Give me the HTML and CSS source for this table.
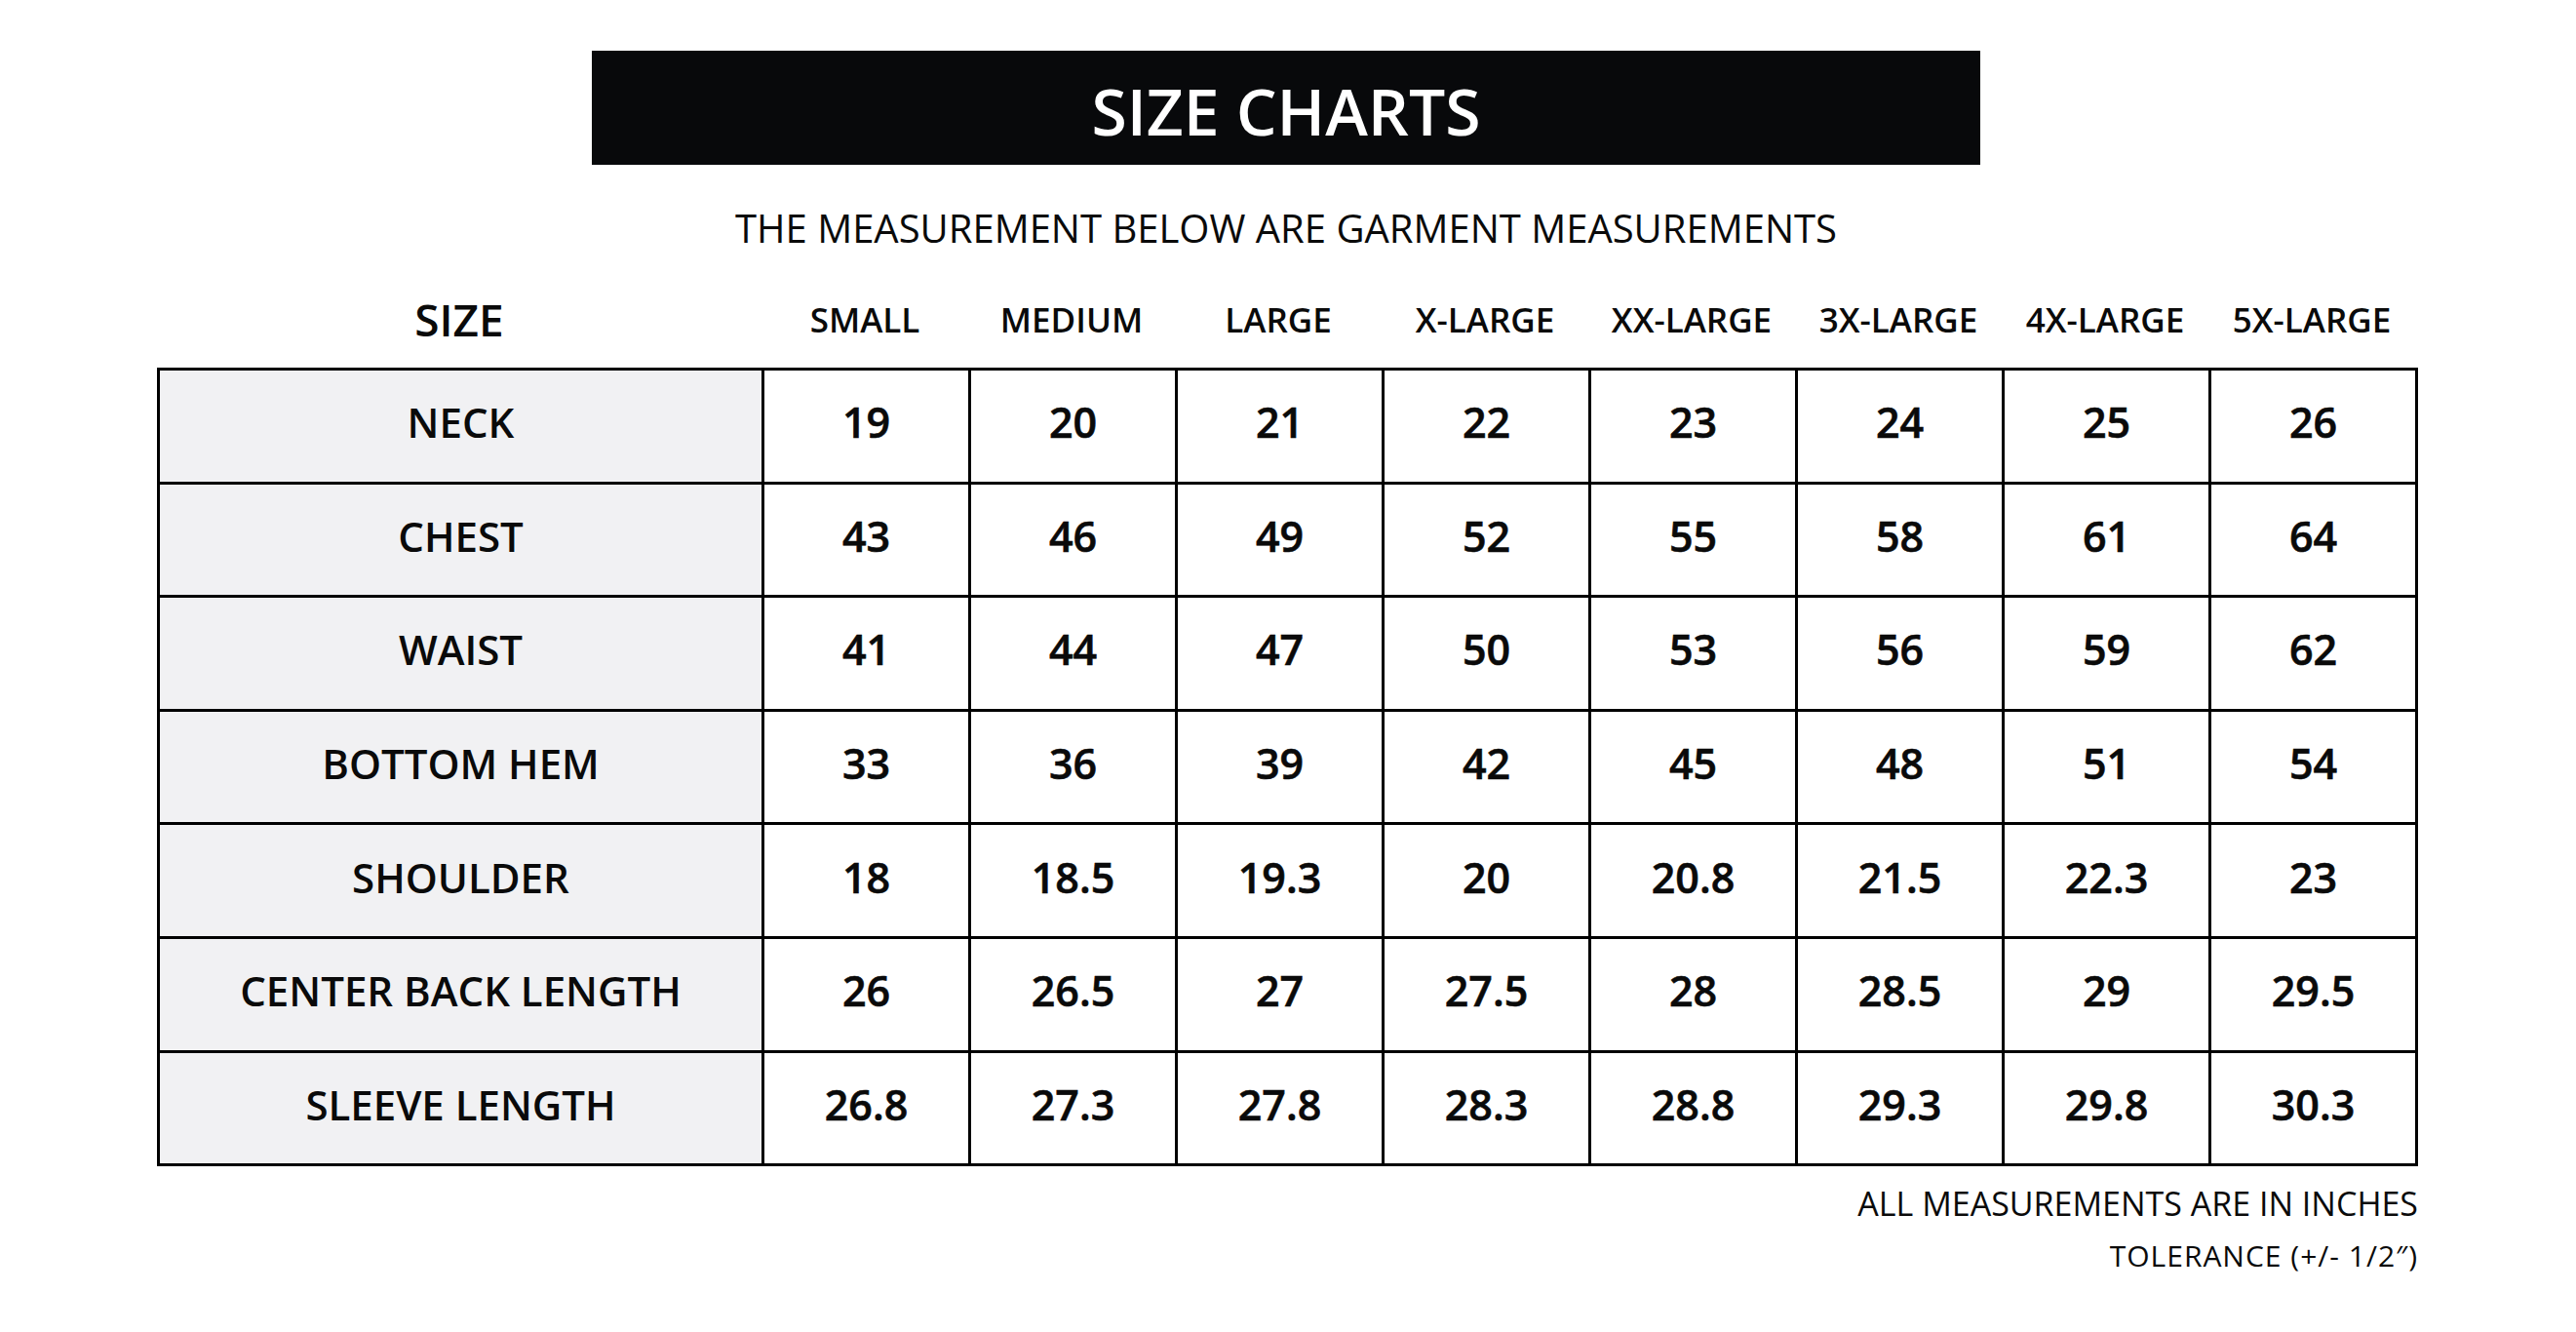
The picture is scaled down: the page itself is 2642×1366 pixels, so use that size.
FILE: index.html
```html
<!DOCTYPE html>
<html lang="en">
<head>
<meta charset="utf-8">
<title>Size Charts</title>
<link rel="stylesheet" href="styles.css">
</head>
<body>
<main class="page">
  <div class="title-bar"><h1 class="title">SIZE CHARTS</h1></div>
  <p class="subtitle">THE MEASUREMENT BELOW ARE GARMENT MEASUREMENTS</p>

  <div class="head-row">
    <div class="head-size">SIZE</div>
    <div class="head-col">SMALL</div>
    <div class="head-col">MEDIUM</div>
    <div class="head-col">LARGE</div>
    <div class="head-col">X-LARGE</div>
    <div class="head-col">XX-LARGE</div>
    <div class="head-col">3X-LARGE</div>
    <div class="head-col">4X-LARGE</div>
    <div class="head-col">5X-LARGE</div>
  </div>

  <table class="chart">
    <colgroup>
      <col class="col-label">
      <col class="col-val"><col class="col-val"><col class="col-val"><col class="col-val">
      <col class="col-val"><col class="col-val"><col class="col-val"><col class="col-val">
    </colgroup>
    <tbody>
      <tr><th>NECK</th><td>19</td><td>20</td><td>21</td><td>22</td><td>23</td><td>24</td><td>25</td><td>26</td></tr>
      <tr><th>CHEST</th><td>43</td><td>46</td><td>49</td><td>52</td><td>55</td><td>58</td><td>61</td><td>64</td></tr>
      <tr><th>WAIST</th><td>41</td><td>44</td><td>47</td><td>50</td><td>53</td><td>56</td><td>59</td><td>62</td></tr>
      <tr><th>BOTTOM HEM</th><td>33</td><td>36</td><td>39</td><td>42</td><td>45</td><td>48</td><td>51</td><td>54</td></tr>
      <tr><th>SHOULDER</th><td>18</td><td>18.5</td><td>19.3</td><td>20</td><td>20.8</td><td>21.5</td><td>22.3</td><td>23</td></tr>
      <tr><th>CENTER BACK LENGTH</th><td>26</td><td>26.5</td><td>27</td><td>27.5</td><td>28</td><td>28.5</td><td>29</td><td>29.5</td></tr>
      <tr><th>SLEEVE LENGTH</th><td>26.8</td><td>27.3</td><td>27.8</td><td>28.3</td><td>28.8</td><td>29.3</td><td>29.8</td><td>30.3</td></tr>
    </tbody>
  </table>

  <div class="notes">
    <p class="note-main">ALL MEASUREMENTS ARE IN INCHES</p>
    <p class="note-small">TOLERANCE (+/- 1/2″)</p>
  </div>
</main>
</body>
</html>
```

FILE: styles.css
```css
html, body {
  margin: 0;
  padding: 0;
  background: #ffffff;
}

body {
  font-family: "Open Sans", "Noto Sans", sans-serif;
  color: #0a0a0a;
}

.page {
  width: 2316px;
  margin-left: 161px;
  padding-top: 52px;
}

.title-bar {
  width: 1424px;
  height: 117px;
  margin: 0 auto;
  background: #08090b;
  display: flex;
  align-items: center;
  justify-content: center;
}

.title {
  margin: 0;
  color: #ffffff;
  font-size: 66px;
  font-weight: 600;
  line-height: 1;
  padding-top: 4px;
}

.subtitle {
  margin: 35px 0 0;
  height: 60px;
  line-height: 60px;
  text-align: center;
  font-size: 40px;
  font-weight: 500;
}

.head-row {
  margin-top: 19px;
  height: 94px;
  padding-bottom: 5px;
  box-sizing: border-box;
  display: grid;
  grid-template-columns: 620px repeat(8, 212px);
  align-items: center;
}

.head-size {
  text-align: center;
  font-size: 46px;
  font-weight: 600;
  padding-bottom: 2px;
}

.head-col {
  text-align: center;
  font-size: 35px;
  font-weight: 600;
  white-space: nowrap;
}

.chart {
  width: 2316px;
  border-collapse: collapse;
  table-layout: fixed;
}

.col-label { width: 620px; }
.col-val { width: 212px; }

.chart tr { height: 116.6px; }

.chart th,
.chart td {
  border: 3px solid #000000;
  padding: 0 0 8px;
  text-align: center;
  vertical-align: middle;
  font-size: 42px;
  font-weight: 600;
}

.chart th {
  background: #f1f1f3;
}

.chart td {
  background: #ffffff;
  font-size: 43px;
  -webkit-text-stroke: 0.6px #0a0a0a;
}

.notes {
  text-align: right;
  margin-right: -3px;
}

.note-main {
  margin: 18px 0 0;
  font-size: 34px;
  font-weight: 500;
  line-height: 40px;
}

.note-small {
  margin: 14px 0 0;
  font-size: 30px;
  font-weight: 400;
  letter-spacing: 1px;
  line-height: 40px;
}
```
